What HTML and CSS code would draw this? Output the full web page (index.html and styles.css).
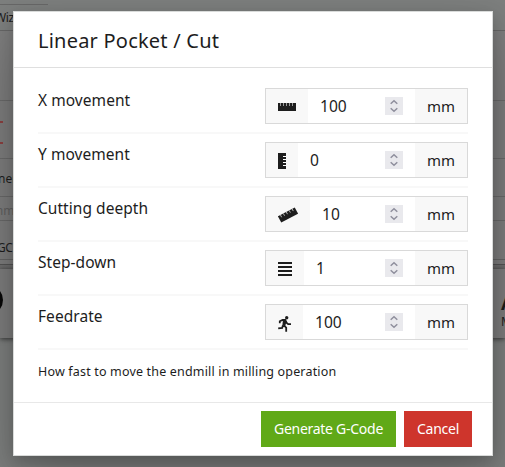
FILE: index.html
```
<!DOCTYPE html>
<html lang="en">
<head>
<meta charset="utf-8">
<title>Linear Pocket / Cut</title>
<link rel="stylesheet" href="styles.css">
</head>
<body>
<div class="page">
  <div class="tabs"><span class="tab">Wiz</span></div>
  <div class="tools"></div>
  <div class="marks"><i></i><i></i></div>
  <div class="label">ner</div>
  <div class="unit">mm</div>
  <div class="code">GC</div>
  <div class="gap"></div>
  <div class="status"><span class="knob"></span><span class="axis"><b>A</b><small>M</small></span></div>
</div>
<main class="dialog">
  <h1 class="title"><span>Linear Pocket / Cut</span></h1>
  <div class="content">
    <div class="row">
      <label class="name">X movement</label>
      <div class="field">
        <span class="icon i1"><svg width="18" height="8" viewBox="0 0 18 8"><path fill="#1d1d1d" d="M0 0h18v8H0z"/><path stroke="#999" d="M2.5 0v3M5.5 0v3M8.5 0v3M11.5 0v3M14.5 0v3"/></svg></span>
        <span class="value">100</span>
        <span class="spin"><svg width="18" height="18" viewBox="0 0 18 18"><path d="M5.7 6.8 9 3.7l3.3 3.1M5.7 11.2 9 14.3l3.3-3.1"/></svg></span>
        <span class="suffix">mm</span>
      </div>
    </div>
    <div class="row">
      <label class="name">Y movement</label>
      <div class="field">
        <span class="icon i2"><svg width="8" height="16" viewBox="0 0 8 16"><path fill="#1d1d1d" d="M0 0h8v16H0z"/><path stroke="#fff" d="M5 3.5h3M5 6.5h3M5 9.5h3M5 12.5h3"/></svg></span>
        <span class="value">0</span>
        <span class="spin"><svg width="18" height="18" viewBox="0 0 18 18"><path d="M5.7 6.8 9 3.7l3.3 3.1M5.7 11.2 9 14.3l3.3-3.1"/></svg></span>
        <span class="suffix">mm</span>
      </div>
    </div>
    <div class="row">
      <label class="name">Cutting deepth</label>
      <div class="field">
        <span class="icon i3"><svg width="20" height="16" viewBox="0 0 20 16"><g transform="rotate(-28 10 8)"><path fill="#1d1d1d" d="M.5 4.5h19v7H.5z"/><path stroke="#ccc" stroke-width=".8" d="M3.3 4.5v2.5M6.6 4.5v2.5M9.9 4.5v2.5M13.2 4.5v2.5M16.5 4.5v2.5"/></g></svg></span>
        <span class="value">10</span>
        <span class="spin"><svg width="18" height="18" viewBox="0 0 18 18"><path d="M5.7 6.8 9 3.7l3.3 3.1M5.7 11.2 9 14.3l3.3-3.1"/></svg></span>
        <span class="suffix">mm</span>
      </div>
    </div>
    <div class="row">
      <label class="name">Step-down</label>
      <div class="field">
        <span class="icon i4"><svg width="14" height="14" viewBox="0 0 14 14"><path fill="#1d1d1d" d="M0 0h14v2H0zM0 4h14v2H0zM0 8h14v2H0zM0 12h14v2H0z"/></svg></span>
        <span class="value">1</span>
        <span class="spin"><svg width="18" height="18" viewBox="0 0 18 18"><path d="M5.7 6.8 9 3.7l3.3 3.1M5.7 11.2 9 14.3l3.3-3.1"/></svg></span>
        <span class="suffix">mm</span>
      </div>
    </div>
    <div class="row">
      <label class="name">Feedrate</label>
      <div class="field">
        <span class="icon i5"><svg width="13" height="16" viewBox="0 0 13 16"><circle cx="8.7" cy="1.8" r="1.7" fill="#1d1d1d"/><path fill="none" stroke="#1d1d1d" stroke-width="1.8" d="M1.8 7.2V5.3L4.6 4h2.6l1.5 3 1.5 1.2H13M4.9 9.2 4.2 12 .2 12.4M5.6 9.2l2.6 2.4v4.2"/><path fill="#1d1d1d" d="M4.9 4.2h3l.5 2-1.2 3.9-2.8-.9z"/></svg></span>
        <span class="value">100</span>
        <span class="spin"><svg width="18" height="18" viewBox="0 0 18 18"><path d="M5.7 6.8 9 3.7l3.3 3.1M5.7 11.2 9 14.3l3.3-3.1"/></svg></span>
        <span class="suffix">mm</span>
      </div>
    </div>
    <p class="hint"><span>How fast to move the endmill in milling operation</span></p>
  </div>
  <footer class="actions">
    <button class="button generate">Generate G-Code</button>
    <button class="button cancel">Cancel</button>
  </footer>
</main>
</body>
</html>
```
FILE: styles.css
```
* { box-sizing: border-box; }
body {
  margin: 0;
  height: 467px;
  overflow: hidden;
  position: relative;
  font-family: "Noto Sans", "Open Sans", sans-serif;
  font-size: 16px;
  color: #1d1d1d;
}
.page {
  height: 467px;
  background: #7d7f7e;
  font-size: 12px;
  white-space: nowrap;
  overflow: hidden;
}
.tabs { height: 31px; padding-top: 4px; border-bottom: 1px solid #666; }
.tab {
  display: block;
  width: 48px;
  height: 26px;
  border-top: 1px solid #686868;
  line-height: 25px;
  text-indent: -5px;
  letter-spacing: -.4px;
}
.tools { height: 70px; border-bottom: 1px solid #6a6a6a; background: #7d7d7d; }
.marks { height: 58px; padding-top: 20px; border-bottom: 1px solid #6a6a6a; background: #7d7d7d; }
.marks i { display: block; width: 3px; height: 2px; margin-bottom: 19px; background: #8c4040; }
.label { height: 38px; line-height: 40px; border-bottom: 1px solid #696969; background: #7d7d7d; text-indent: -2px; }
.unit { height: 24px; line-height: 27px; border-bottom: 1px solid #696969; background: #7d7d7d; color: #606060; text-indent: -8px; }
.code { height: 39px; padding-top: 15px; line-height: 24px; border-bottom: 1px solid #646464; background: #7d7d7d; text-indent: -3px; letter-spacing: -.5px; }
.gap { height: 9px; border-top: 4px solid #7d7d7d; border-bottom: 4px solid #717171; background: #555; }
.status {
  height: 69px;
  display: flex;
  justify-content: space-between;
  align-items: center;
  background: #7d7d7d;
  box-shadow: 0 1px 5px rgba(0, 0, 0, .6);
}
.knob { width: 30px; height: 30px; margin: -8px 0 0 -27px; border-radius: 50%; background: #080808; }
.axis { width: 4px; margin-top: 14px; }
.axis b { display: block; font-size: 18px; line-height: 22px; }
.axis small { display: block; font-size: 12px; line-height: 16px; }

.dialog {
  position: absolute;
  left: 13px;
  top: 11px;
  width: 480px;
  height: 445px;
  display: flex;
  flex-direction: column;
  background: #fff;
  border: 1px solid #d9dbda;
  box-shadow: 0 25.6px 57.6px 0 rgba(0, 0, 0, .22), 0 4.8px 14.4px 0 rgba(0, 0, 0, .18);
}
.title {
  margin: 0;
  height: 56px;
  padding-left: 24px;
  border-bottom: 1px solid #dfdfdf;
  font-size: 20px;
  font-weight: 400;
  line-height: 58px;
  letter-spacing: .22px;
}
.content { flex: 1; padding: 12px 24px 0; }
.row {
  display: flex;
  justify-content: space-between;
  height: 54px;
  padding-top: 8px;
  border-bottom: 2px solid #f8f8f8;
}
.name { line-height: 25px; font-size: 15.5px; letter-spacing: .05px; white-space: nowrap; }
.field {
  width: 203px;
  height: 36px;
  display: flex;
  align-items: center;
  border: 1px solid #d9d9d9;
}
.icon {
  height: 34px;
  flex: none;
  display: flex;
  align-items: center;
  padding-left: 12px;
  background: #f8f8f8;
}
.i1 { width: 42px; padding-top: 2px; }
.i2 { width: 32px; padding-top: 2px; }
.i3 { width: 44px; padding-top: 2px; }
.i4 { width: 38px; padding-top: 2px; }
.i5 { width: 37px; padding-top: 3px; }
.value { flex: 1; padding-left: 12px; line-height: 34px; font-size: 15.6px; }
.spin { width: 18px; height: 18px; margin-right: 12px; background: #e9e9ed; }
.spin svg { display: block; fill: none; stroke: #8f8f9d; stroke-width: 1.5; }
.suffix {
  width: 52px;
  height: 34px;
  padding-left: 12px;
  background: #f8f8f8;
  line-height: 35px;
  font-size: 15px;
}
.hint { margin: 0; padding-top: 12px; line-height: 20px; font-size: 12.5px; letter-spacing: .17px; white-space: nowrap; }
.actions {
  height: 53px;
  padding: 8px 20px;
  display: flex;
  justify-content: flex-end;
  gap: 8px;
  border-top: 1px solid #e8e8e8;
}
.button {
  height: 36px;
  padding: 0;
  border: 0;
  color: #fff;
  font: 14px/36px "Noto Sans", "Open Sans", sans-serif;
  letter-spacing: -.27px;
  white-space: nowrap;
}
.generate { width: 135px; background: #60a917; }
.cancel { width: 68px; background: #ce352c; }
```
